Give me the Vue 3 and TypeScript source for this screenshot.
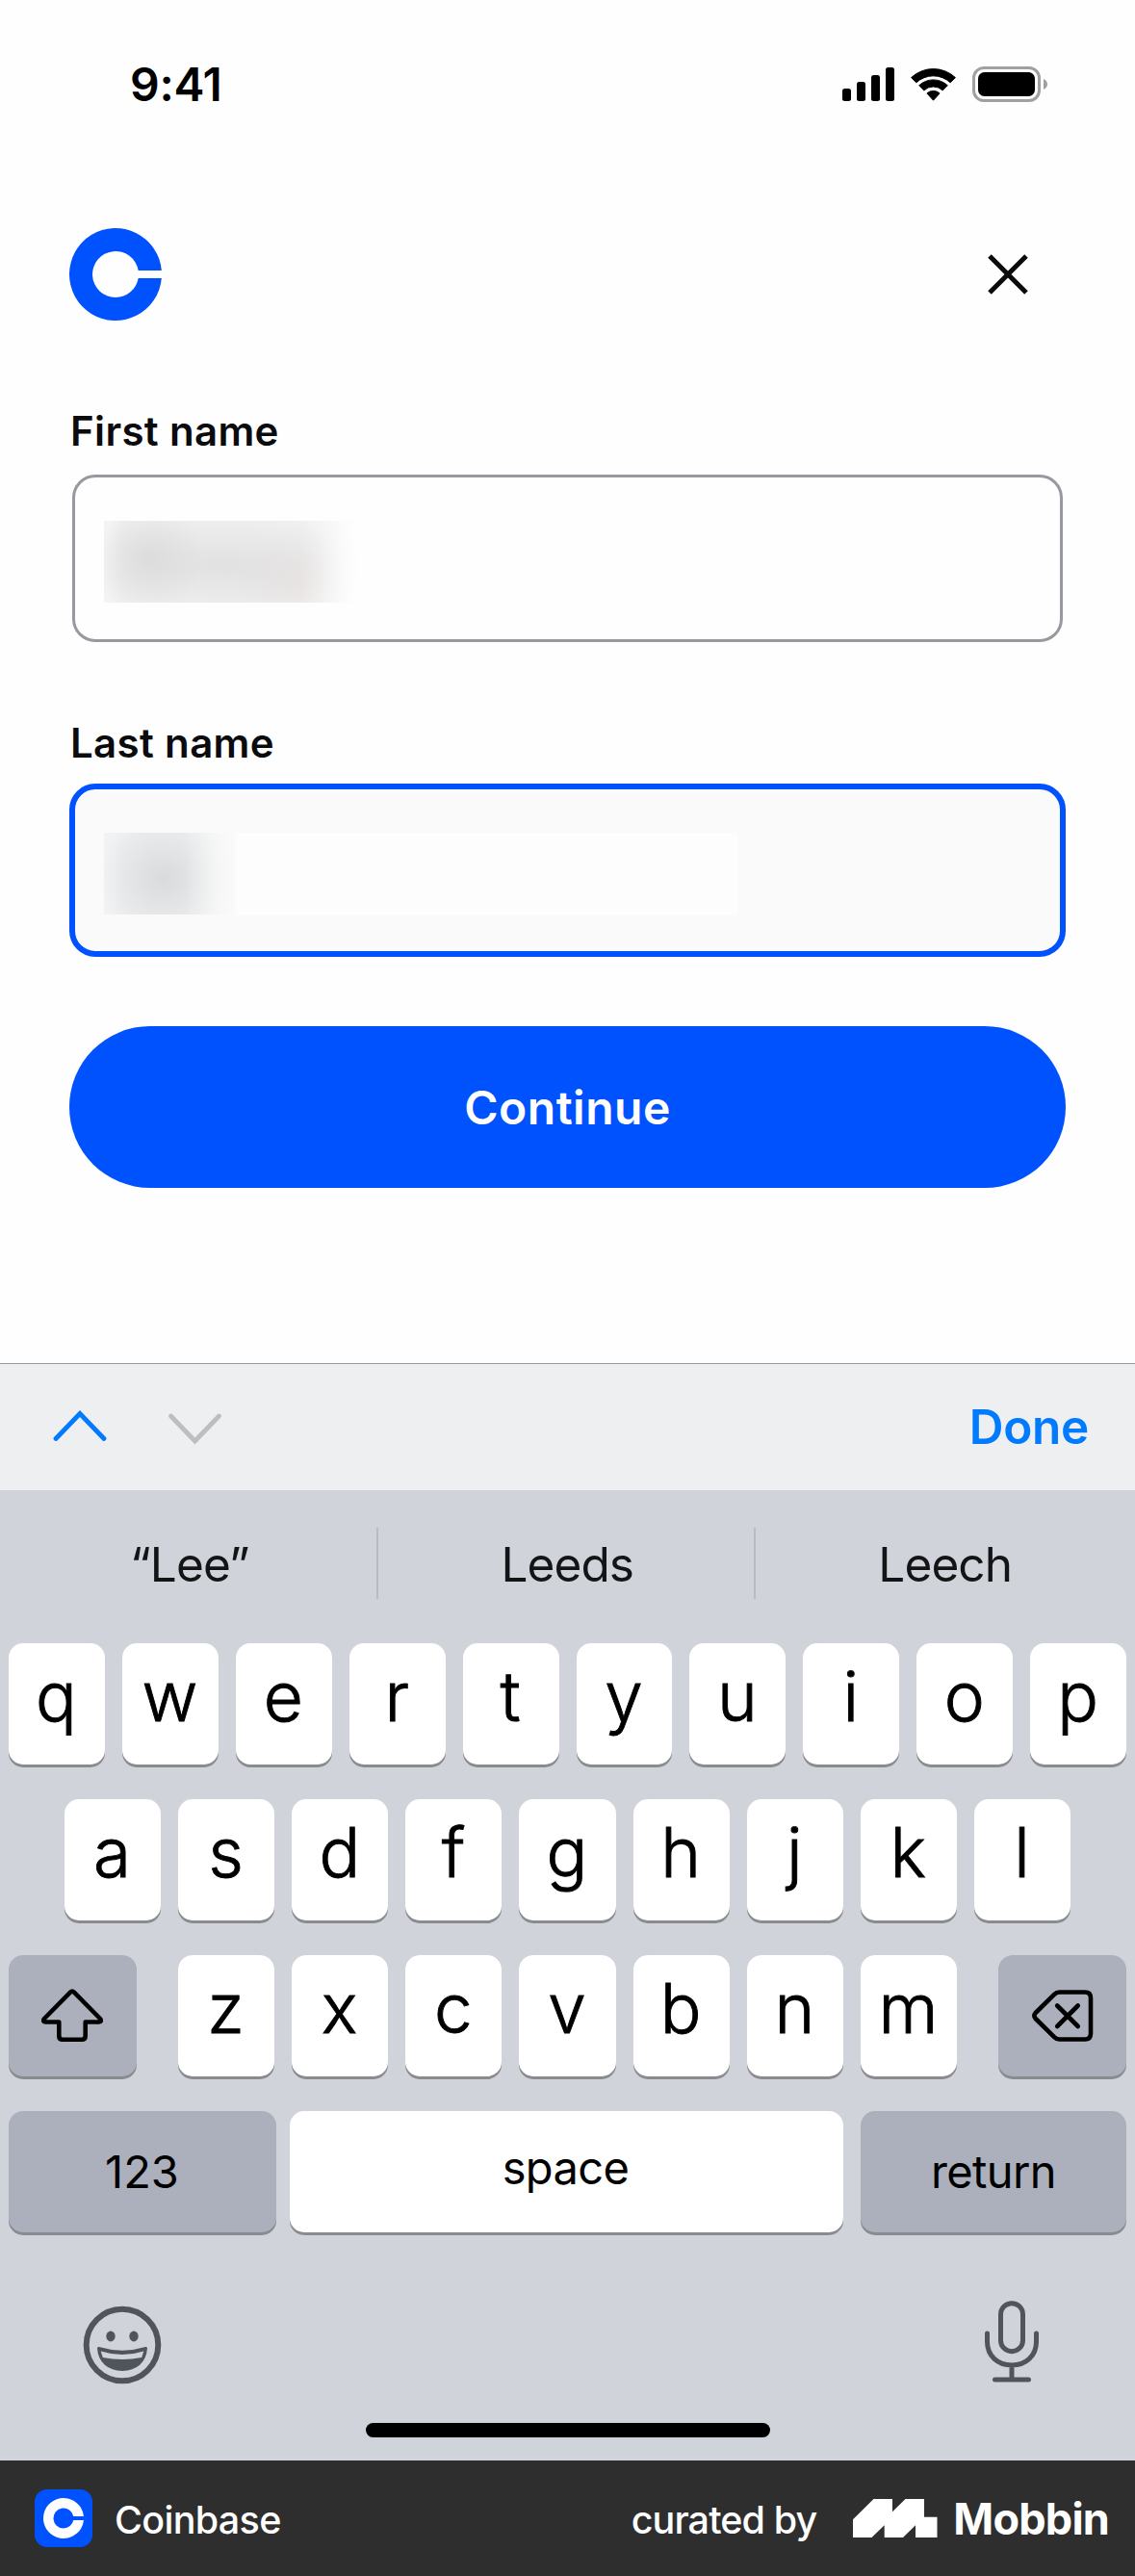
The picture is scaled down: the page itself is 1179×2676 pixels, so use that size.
<script setup lang="ts">
interface Field {
  id: string
  label: string
  focused: boolean
}

const fields: Field[] = [
  { id: 'first', label: 'First name', focused: false },
  { id: 'last', label: 'Last name', focused: true },
]

const suggestions: string[] = ['“Lee”', 'Leeds', 'Leech']
const topRow: string[] = [...'qwertyuiop']
const homeRow: string[] = [...'asdfghjkl']
const bottomRow: string[] = [...'zxcvbnm']
</script>

<template>
  <div class="screen">
    <header class="status">
      <span class="time">9:41</span>
      <svg class="status-icons" width="214" height="38" viewBox="0 0 214 38">
        <rect x="0" y="24" width="9" height="13" rx="2.5" />
        <rect x="15" y="17" width="9" height="20" rx="2.5" />
        <rect x="30" y="10" width="9" height="27" rx="2.5" />
        <rect x="45" y="2" width="9" height="35" rx="2.5" />
        <path d="M71.6 12.6a33.500 33.500 0 0 1 45.800 0l-5.200 5.200a26 26 0 0 0-35.400 0z" stroke="#000" stroke-width="1" stroke-linejoin="round" />
        <path d="M79.700 20.800a21.500 21.500 0 0 1 29.600 0l-5.100 5.100a14 14 0 0 0-19.400 0z" stroke="#000" stroke-width="1" stroke-linejoin="round" />
        <path d="M87.900 28.900a10 10 0 0 1 13.200 0l-6.600 7.300z" stroke="#000" stroke-width="1" stroke-linejoin="round" />
        <rect x="136.500" y="2.500" width="68" height="34" rx="10.500" fill="none" stroke="#a0a0a0" stroke-width="3" />
        <rect x="141" y="7" width="59" height="25" rx="6.500" />
        <path d="M209 14v11c2.500-1 4-3 4-5.500s-1.500-4.500-4-5.500z" fill="#a0a0a0" />
      </svg>
    </header>

    <main class="sheet">
      <div class="topbar">
        <svg width="96" height="96" viewBox="0 0 96 96">
          <path d="M48 72a24 24 0 1 1 23.660-28H95.830A48 48 0 1 0 95.830 52H71.660A24 24 0 0 1 48 72z" fill="#0052ff" />
        </svg>
        <svg class="close" width="42" height="42" viewBox="0 0 42 42">
          <path d="M2 2l38 38M40 2L2 40" fill="none" stroke="#0a0b0d" stroke-width="5" />
        </svg>
      </div>

      <div v-for="field in fields" :key="field.id" class="field">
        <label class="label">{{ field.label }}</label>
        <div class="input" :class="{ focused: field.focused }">
          <div class="redacted" :class="field.id" />
          <div v-if="field.focused" class="wash" />
        </div>
      </div>

      <button class="continue" type="button">Continue</button>
    </main>

    <section class="accessory">
      <svg width="176" height="36" viewBox="0 0 176 36">
        <path d="M3 29.500L28 3.500L53 29.500" fill="none" stroke="#007aff" stroke-width="4.800" stroke-linecap="round" stroke-linejoin="miter" />
        <path d="M122.500 6L147.500 32L172.500 6" fill="none" stroke="#bdbebf" stroke-width="4.800" stroke-linecap="round" stroke-linejoin="miter" />
      </svg>
      <span class="done">Done</span>
    </section>

    <section class="keyboard">
      <div class="suggestions">
        <span v-for="word in suggestions" :key="word" class="suggestion">{{ word }}</span>
      </div>
      <div class="rows">
        <div class="row">
          <div v-for="k in topRow" :key="k" class="key">{{ k }}</div>
        </div>
        <div class="row home">
          <div v-for="k in homeRow" :key="k" class="key">{{ k }}</div>
        </div>
        <div class="row">
          <div class="key dark side shift">
            <svg width="64" height="56" viewBox="0 0 64 56">
              <path d="M30 3.600q2-2 4 0L61 31q2.300 3.300-1.200 3.500H45.700V49q0 3.700-3.700 3.700H22q-3.700 0-3.700-3.700V34.500H4.200Q.7 34.300 3 31z" fill="none" stroke="#000" stroke-width="4.600" stroke-linejoin="round" />
            </svg>
          </div>
          <div class="letters">
            <div v-for="k in bottomRow" :key="k" class="key">{{ k }}</div>
          </div>
          <div class="key dark side">
            <svg width="66" height="58" viewBox="0 0 66 58">
              <path d="M29.500 4.500H56q6 0 6 6v37q0 6-6 6H29.500q-3.200 0-5.400-2.300L4.700 32q-2.600-3 0-6L24.100 6.800q2.200-2.300 5.400-2.300z" fill="none" stroke="#000" stroke-width="4.600" stroke-linejoin="round" />
              <path d="M27.200 18.500l21.500 21.500M48.700 18.500l-21.500 21.500" fill="none" stroke="#000" stroke-width="4.600" stroke-linecap="round" />
            </svg>
          </div>
        </div>
        <div class="row last">
          <div class="key dark word numbers">123</div>
          <div class="key word space">space</div>
          <div class="key dark word return">return</div>
        </div>
      </div>
      <div class="tools">
        <svg class="emoji" width="82" height="82" viewBox="0 0 82 82">
          <circle cx="41" cy="41" r="37.300" fill="none" stroke="#50545b" stroke-width="6" />
          <ellipse cx="29" cy="32" rx="4.700" ry="5.400" fill="#50545b" />
          <ellipse cx="53" cy="32" rx="4.700" ry="5.400" fill="#50545b" />
          <path d="M16.500 44.500Q41 52 65.500 44.500C64.500 58.500 55 66.500 41 66.500S17.500 58.500 16.500 44.500z" fill="#50545b" stroke="#50545b" stroke-width="3" stroke-linejoin="round" />
          <path d="M18.700 47.500Q41 54.500 63.300 47.500L61.200 54Q41 57.800 20.800 54z" fill="#d0d3da" />
        </svg>
        <svg width="58" height="86" viewBox="0 0 58 86">
          <g fill="none" stroke="#50545b" stroke-width="5" stroke-linecap="round">
            <rect x="17.500" y="2.700" width="23" height="50" rx="11.500" />
            <path d="M3.500 34v8.500c0 15 11 24.500 25.500 24.500s25.500-9.500 25.500-24.500V34M29 67v15M11.500 82h35" />
          </g>
        </svg>
      </div>
      <div class="home-indicator" />
    </section>

    <footer class="footer">
      <svg width="60" height="60" viewBox="0 0 60 60">
        <rect width="60" height="60" rx="13" fill="#0052ff" />
        <path d="M30 40.500a10.500 10.500 0 1 1 10.300-12.500H50.900A21 21 0 1 0 50.900 32H40.300A10.500 10.500 0 0 1 30 40.500z" fill="#fff" />
      </svg>
      <span class="app-name">Coinbase</span>
      <span class="curated">curated by</span>
      <svg class="mark" width="88" height="40" viewBox="0 0 88 40">
        <path d="M0 21.300L21.500 0H41V13.300L54.500 0H74V18.700H87.500V40H65V27.300L52 40H32.700V27.300L19.500 40H0z" fill="#fff" />
      </svg>
      <span class="brand">Mobbin</span>
    </footer>
  </div>
</template>

<style>
body {
  margin: 0;
  background: #fefefe;
}
</style>

<style scoped>
.screen {
  width: 1179px;
  height: 2676px;
  display: flex;
  flex-direction: column;
  background: #fefefe;
  font-family: Inter, 'Liberation Sans', sans-serif;
  overflow: hidden;
  white-space: nowrap;
}
.status {
  box-sizing: border-box;
  height: 237px;
  padding: 58px 90px 0 135px;
  display: flex;
  justify-content: space-between;
  align-items: flex-start;
}
.time {
  font-size: 48px;
  font-weight: 600;
  line-height: 60px;
  letter-spacing: -0.3px;
}
.status-icons {
  margin-top: 10px;
}
.sheet {
  box-sizing: border-box;
  height: 1179px;
  padding: 0 72px;
  display: flex;
  flex-direction: column;
}
.topbar {
  display: flex;
  justify-content: space-between;
  align-items: center;
  padding-right: 39px;
  margin-bottom: 85px;
}
.field {
  display: flex;
  flex-direction: column;
  height: 324px;
}
.label {
  padding-left: 1px;
  font-size: 42px;
  font-weight: 600;
  line-height: 60px;
  letter-spacing: 0.35px;
  color: #0a0b0d;
}
.input {
  box-sizing: border-box;
  height: 174px;
  margin: 15px 3px 0;
  padding: 45px 0 0 30px;
  display: flex;
  border: 3px solid #98989f;
  border-radius: 24px;
}
.input.focused {
  height: 180px;
  margin: 12px 0 0;
  padding-top: 45px;
  border: 6px solid #0052ff;
  border-radius: 27px;
  background: #fafafa;
}
.redacted {
  height: 85px;
}
.redacted.first {
  width: 264px;
  background:
    radial-gradient(ellipse 60px 60px at 46px 38px, rgba(205, 205, 205, 0.45), transparent),
    radial-gradient(ellipse 170px 60px at 125px 46px, rgba(208, 208, 208, 0.5), transparent),
    radial-gradient(ellipse 65px 55px at 200px 64px, rgba(230, 218, 216, 0.4), transparent),
    #f2f2f2;
  mask-image: linear-gradient(90deg, rgba(0, 0, 0, 0.75), #000 20px, #000 205px, rgba(0, 0, 0, 0.75) 225px, rgba(0, 0, 0, 0.2) 248px, transparent 264px);
}
.redacted.last {
  width: 137px;
  background:
    radial-gradient(ellipse 70px 66px at 62px 47px, rgba(208, 209, 210, 0.7), transparent),
    #eff0f1;
  mask-image: linear-gradient(90deg, rgba(0, 0, 0, 0.75), #000 20px, #000 85px, rgba(0, 0, 0, 0.7) 102px, rgba(0, 0, 0, 0.15) 124px, transparent 137px);
}
.wash {
  width: 522px;
  height: 86px;
  background: #fdfdfd;
}
.continue {
  flex: none;
  height: 168px;
  margin: 0;
  padding: 0;
  border: 0;
  border-radius: 84px;
  background: #0052ff;
  color: #fff;
  font-family: inherit;
  font-size: 48px;
  font-weight: 600;
  letter-spacing: 0.5px;
}
.accessory {
  box-sizing: border-box;
  height: 132px;
  border-top: 1px solid #97999c;
  padding: 0 48px 0 55px;
  display: flex;
  justify-content: space-between;
  align-items: center;
  background: #eeeff1;
}
.done {
  padding-bottom: 2px;
  font-size: 49.5px;
  font-weight: 600;
  letter-spacing: -0.3px;
  color: #007aff;
}
.keyboard {
  height: 1008px;
  display: flex;
  flex-direction: column;
  background: #d0d3da;
}
.suggestions {
  height: 74px;
  padding: 39px 0 46px;
  display: flex;
}
.suggestion {
  box-sizing: border-box;
  flex: 0 0 392.5px;
  padding-left: 1px;
  text-align: center;
  font-size: 49.5px;
  line-height: 76px;
  letter-spacing: -0.9px;
  color: #131416;
}
.suggestion:not(:last-child) {
  padding-left: 3px;
  border-right: 2px solid #b9bbc0;
}
.rows {
  padding: 0 9px;
  display: flex;
  flex-direction: column;
  gap: 36px;
}
.row {
  display: flex;
  gap: 18px;
}
.row.home {
  padding: 0 58px;
}
.row.last {
  gap: 0;
}
.key {
  box-sizing: border-box;
  flex: 1;
  height: 126px;
  padding: 0 1px 16px 0;
  display: flex;
  justify-content: center;
  align-items: center;
  border-radius: 15px;
  background: #fff;
  box-shadow: 0 3px 0 #898b8f;
  font-size: 71px;
  font-weight: 300;
  -webkit-text-stroke: 0.9px #000;
  line-height: 110px;
  color: #000;
}
.key.dark {
  background: #abb0bc;
  padding: 0;
}
.key.side {
  flex: 0 0 133px;
}
.key.shift {
  padding-right: 2px;
}
.letters {
  flex: 1;
  display: flex;
  gap: 18px;
  padding: 0 25px;
}
.key.word {
  font-size: 47px;
  font-weight: 400;
  -webkit-text-stroke: 0;
  letter-spacing: -0.6px;
}
.key.numbers {
  flex: 0 0 278px;
  padding-right: 1px;
  letter-spacing: 0;
}
.key.space {
  flex: 0 0 575px;
  margin: 0 18px 0 14px;
  padding: 0 2px 8px 0;
}
.tools {
  height: 86px;
  margin-top: 71px;
  padding: 0 99px 0 86px;
  display: flex;
  justify-content: space-between;
  align-items: center;
}
.emoji {
  margin-top: 6px;
}
.home-indicator {
  width: 420px;
  height: 15px;
  margin: 41px 0 0 380px;
  border-radius: 8px;
  background: #000;
}
.footer {
  box-sizing: border-box;
  height: 120px;
  padding: 0 27px 0 36px;
  display: flex;
  align-items: center;
  background: #2e2e2e;
  color: #fff;
}
.app-name {
  margin-left: 23px;
  font-size: 39.5px;
  font-weight: 500;
  letter-spacing: -0.7px;
  line-height: 50px;
  padding-top: 4px;
}
.curated {
  margin-left: auto;
  font-size: 39.5px;
  font-weight: 500;
  letter-spacing: -0.9px;
  line-height: 50px;
  padding-top: 4px;
}
.mark {
  margin: 0 16px 0 38px;
}
.brand {
  font-size: 45px;
  font-weight: 700;
  letter-spacing: -0.8px;
}
</style>
